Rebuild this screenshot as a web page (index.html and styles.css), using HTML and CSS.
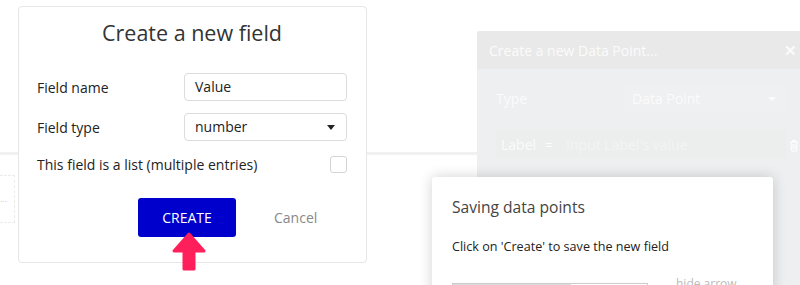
FILE: index.html
```html
<!DOCTYPE html>
<html lang="en">
<head>
    <meta charset="UTF-8">
    <title>Create a new field</title>
    <link rel="stylesheet" href="styles.css">
</head>
<body>
    <div class="stage">
        <!-- page behind the popups -->
        <div class="page-band"></div>
        <div class="page-row">
            <div class="dotted-box"><span>...</span></div>
        </div>

        <div class="dp-panel">
            <div class="dp-head">
                <span>Create a new Data Point...</span>
                <span class="dp-close">&#10005;</span>
            </div>
            <div class="dp-body">
                <div class="dp-type">
                    <span class="dp-type-label">Type</span>
                    <div class="dp-select">Data Point <span class="dp-caret"></span></div>
                </div>
                <div class="dp-label-row">
                    <span>Label</span><span class="dp-eq">=</span><span class="dp-ph">Input Label's value</span>
                    <svg class="dp-trash" width="10" height="13" viewBox="0 0 10 13"><path d="M1 3h8M3.5 3V1.5h3V3M2 3l.6 9h4.8L8 3M4 5v5M6 5v5" fill="none" stroke="#fff" stroke-width="1"/></svg>
                </div>
            </div>
        </div>

        <div class="field-dialog">
            <h1 class="fd-title">Create a new field</h1>
            <div class="fd-row">
                <label class="fd-label">Field name</label>
                <div class="fd-input">Value</div>
            </div>
            <div class="fd-row">
                <label class="fd-label">Field type</label>
                <div class="fd-input fd-select">number <span class="fd-caret"></span></div>
            </div>
            <div class="fd-row fd-check-row">
                <label class="fd-label">This field is a list (multiple entries)</label>
                <div class="fd-check"></div>
            </div>
            <div class="fd-actions">
                <button class="btn-create">CREATE</button>
                <span class="btn-cancel">Cancel</span>
            </div>
        </div>

        <svg class="pointer" width="34" height="40" viewBox="0 0 34 40">
            <path d="M17 2 L2 19 L12 19 L12 37 L22 37 L22 19 L32 19 Z" fill="#ff1f5b" stroke="#ff1f5b" stroke-width="3" stroke-linejoin="round"/>
        </svg>

        <div class="tip">
            <div class="tip-title">Saving data points</div>
            <div class="tip-text">Click on 'Create' to save the new field</div>
            <div class="tip-foot">
                <div class="tip-bar"><div class="tip-bar-fill"></div></div>
                <span class="tip-hide">hide arrow</span>
            </div>
        </div>
    </div>
</body>
</html>
```

FILE: styles.css
```css
body { margin: 0; background: #fff; font-family: "Open Sans", "Noto Sans", sans-serif; overflow: hidden; }
.stage { position: relative; width: 800px; height: 285px; overflow: hidden; }

.page-band { margin-top: 152px; height: 3px; background: #f1f1f1; }
.page-row { margin-top: 20px; }
.dotted-box { width: 14px; height: 46px; border: 1px dashed #ececec; border-left: none; color: #ccc; font-size: 9px; line-height: 46px; }

/* greyed-out data point editor */
.dp-panel { position: absolute; left: 477px; top: 31px; width: 340px; height: 260px; background: #eeeff0; border-radius: 3px 0 0 0; }
.dp-head { height: 38px; background: #e9e9e9; display: flex; align-items: center; padding-left: 12px; color: #fbfbfb; font-size: 14px; border-radius: 3px 0 0 0; }
.dp-close { margin-left: auto; margin-right: 20px; font-size: 15px; font-weight: bold; }
.dp-body { padding: 15px 0 0 19px; }
.dp-type { display: flex; align-items: center; height: 29px; }
.dp-type-label { width: 127px; color: #fbfbfb; font-size: 14px; }
.dp-select { width: 154px; height: 29px; padding-left: 9px; background: #eff0f1; color: #fbfbfb; font-size: 14px; line-height: 29px; position: relative; }
.dp-caret { position: absolute; right: 10px; top: 13px; border: 4px solid transparent; border-top-color: #fbfbfb; }
.dp-label-row { margin-top: 17px; width: 285px; height: 28px; padding-left: 5px; background: #eceded; display: flex; align-items: center; color: #fbfbfb; font-size: 14px; position: relative; }
.dp-eq { margin: 0 13px 0 9px; }
.dp-ph { color: #f4f4f4; }
.dp-trash { position: absolute; right: -13px; top: 9px; }

/* create field dialog */
.field-dialog { position: absolute; left: 18px; top: 6px; width: 349px; height: 257px; background: #fff; border: 1px solid #e6e6e6; border-radius: 4px; padding: 0 19px 0 18px; box-sizing: border-box; }
.fd-title { margin: 11px 0 26px; text-align: center; font-size: 21.5px; font-weight: normal; color: #333; }
.fd-row { display: flex; align-items: center; justify-content: space-between; height: 28px; margin-bottom: 12px; }
.fd-label { font-size: 14px; color: #222; }
.fd-input { width: 163px; height: 28px; box-sizing: border-box; border: 1px solid #dcdcdc; border-radius: 4px; padding-left: 10px; font-size: 14px; line-height: 26px; color: #222; position: relative; }
.fd-caret { position: absolute; right: 11px; top: 11px; border: 4px solid transparent; border-top: 5px solid #222; border-bottom: 0; }
.fd-check-row { height: 22px; margin-top: 3px; }
.fd-check { width: 17px; height: 17px; box-sizing: border-box; border: 1px solid #d4d4d4; border-radius: 3px; }
.fd-actions { display: flex; align-items: center; margin-top: 23px; padding-left: 101px; }
.btn-create { width: 98px; height: 39px; background: #0000cc; color: #fff; border: none; border-radius: 3px; font-family: inherit; font-size: 14px; }
.btn-cancel { margin-left: 38px; font-size: 14px; color: #888; }

.pointer { position: absolute; left: 172px; top: 232px; }

/* tour tooltip */
.tip { position: absolute; left: 432px; top: 177px; width: 341px; height: 130px; background: #fff; border-radius: 3px; box-shadow: 0 0 14px rgba(0, 0, 0, 0.18); padding: 19px 20px 0 20px; box-sizing: border-box; }
.tip-title { font-size: 15.6px; color: #444; }
.tip-text { margin-top: 20px; font-size: 12.6px; color: #222; }
.tip-foot { display: flex; margin-top: 28px; }
.tip-bar { width: 194px; height: 8px; border: 1px solid #ccc; }
.tip-bar-fill { width: 118px; height: 100%; background: #ddd; }
.tip-hide { margin-left: 28px; margin-top: -8px; font-size: 12px; color: #bbb; }
```
